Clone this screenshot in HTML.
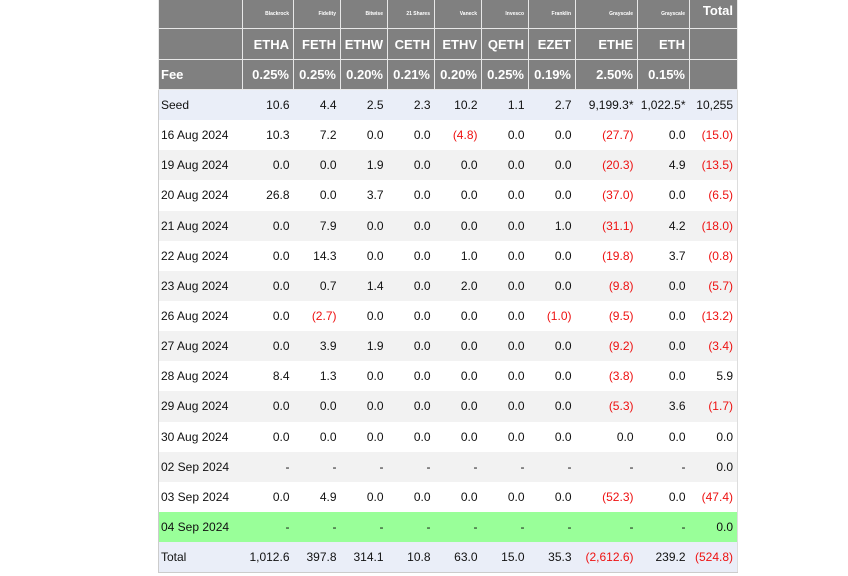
<!DOCTYPE html>
<html><head><style>
body{margin:0;background:#fff;font-family:"Liberation Sans",Arial,sans-serif;}
table{position:absolute;left:158px;top:-1px;border-collapse:collapse;table-layout:fixed;font-size:12px;color:#111;}
td{padding:0 4px 0 2px;text-align:right;white-space:nowrap;border:0;height:30.15px;}
td:first-child{text-align:left;}
thead td{background:#808080;color:#fff;font-weight:bold;border:1px solid #e8e8e8;}
thead tr.p td{height:25px;font-size:5px;vertical-align:middle;}
thead tr.p td.t{font-size:13px;vertical-align:top;padding-top:3px;}
thead tr.s td{height:30px;font-size:13px;}
thead tr.f td{height:29px;font-size:13px;}
tbody tr.w td{background:#fff}
tbody tr.g td{background:#f2f2f2}
tbody tr.b td{background:#eaeef8}
tbody tr.gr td{background:#99ff99}
.r{color:#ee1111}
tbody{border-left:1px solid #ccc;border-right:1px solid #ddd;border-bottom:1px solid #ccc}
</style></head><body>
<table>
<colgroup><col style="width:84px"><col style="width:51px"><col style="width:47px"><col style="width:47px"><col style="width:47px"><col style="width:47px"><col style="width:47px"><col style="width:47px"><col style="width:62px"><col style="width:52px"><col style="width:48px"></colgroup>
<thead>
<tr class="p"><td></td><td>Blackrock</td><td>Fidelity</td><td>Bitwise</td><td>21 Shares</td><td>Vaneck</td><td>Invesco</td><td>Franklin</td><td>Grayscale</td><td>Grayscale</td><td class="t">Total</td></tr>
<tr class="s"><td></td><td>ETHA</td><td>FETH</td><td>ETHW</td><td>CETH</td><td>ETHV</td><td>QETH</td><td>EZET</td><td>ETHE</td><td>ETH</td><td></td></tr>
<tr class="f"><td>Fee</td><td>0.25%</td><td>0.25%</td><td>0.20%</td><td>0.21%</td><td>0.20%</td><td>0.25%</td><td>0.19%</td><td>2.50%</td><td>0.15%</td><td></td></tr>
</thead>
<tbody>
<tr class="b"><td>Seed</td><td>10.6</td><td>4.4</td><td>2.5</td><td>2.3</td><td>10.2</td><td>1.1</td><td>2.7</td><td>9,199.3*</td><td>1,022.5*</td><td>10,255</td></tr>
<tr class="w"><td>16 Aug 2024</td><td>10.3</td><td>7.2</td><td>0.0</td><td>0.0</td><td class="r">(4.8)</td><td>0.0</td><td>0.0</td><td class="r">(27.7)</td><td>0.0</td><td class="r">(15.0)</td></tr>
<tr class="g"><td>19 Aug 2024</td><td>0.0</td><td>0.0</td><td>1.9</td><td>0.0</td><td>0.0</td><td>0.0</td><td>0.0</td><td class="r">(20.3)</td><td>4.9</td><td class="r">(13.5)</td></tr>
<tr class="w"><td>20 Aug 2024</td><td>26.8</td><td>0.0</td><td>3.7</td><td>0.0</td><td>0.0</td><td>0.0</td><td>0.0</td><td class="r">(37.0)</td><td>0.0</td><td class="r">(6.5)</td></tr>
<tr class="g"><td>21 Aug 2024</td><td>0.0</td><td>7.9</td><td>0.0</td><td>0.0</td><td>0.0</td><td>0.0</td><td>1.0</td><td class="r">(31.1)</td><td>4.2</td><td class="r">(18.0)</td></tr>
<tr class="w"><td>22 Aug 2024</td><td>0.0</td><td>14.3</td><td>0.0</td><td>0.0</td><td>1.0</td><td>0.0</td><td>0.0</td><td class="r">(19.8)</td><td>3.7</td><td class="r">(0.8)</td></tr>
<tr class="g"><td>23 Aug 2024</td><td>0.0</td><td>0.7</td><td>1.4</td><td>0.0</td><td>2.0</td><td>0.0</td><td>0.0</td><td class="r">(9.8)</td><td>0.0</td><td class="r">(5.7)</td></tr>
<tr class="w"><td>26 Aug 2024</td><td>0.0</td><td class="r">(2.7)</td><td>0.0</td><td>0.0</td><td>0.0</td><td>0.0</td><td class="r">(1.0)</td><td class="r">(9.5)</td><td>0.0</td><td class="r">(13.2)</td></tr>
<tr class="g"><td>27 Aug 2024</td><td>0.0</td><td>3.9</td><td>1.9</td><td>0.0</td><td>0.0</td><td>0.0</td><td>0.0</td><td class="r">(9.2)</td><td>0.0</td><td class="r">(3.4)</td></tr>
<tr class="w"><td>28 Aug 2024</td><td>8.4</td><td>1.3</td><td>0.0</td><td>0.0</td><td>0.0</td><td>0.0</td><td>0.0</td><td class="r">(3.8)</td><td>0.0</td><td>5.9</td></tr>
<tr class="g"><td>29 Aug 2024</td><td>0.0</td><td>0.0</td><td>0.0</td><td>0.0</td><td>0.0</td><td>0.0</td><td>0.0</td><td class="r">(5.3)</td><td>3.6</td><td class="r">(1.7)</td></tr>
<tr class="w"><td>30 Aug 2024</td><td>0.0</td><td>0.0</td><td>0.0</td><td>0.0</td><td>0.0</td><td>0.0</td><td>0.0</td><td>0.0</td><td>0.0</td><td>0.0</td></tr>
<tr class="g"><td>02 Sep 2024</td><td>-</td><td>-</td><td>-</td><td>-</td><td>-</td><td>-</td><td>-</td><td>-</td><td>-</td><td>0.0</td></tr>
<tr class="w"><td>03 Sep 2024</td><td>0.0</td><td>4.9</td><td>0.0</td><td>0.0</td><td>0.0</td><td>0.0</td><td>0.0</td><td class="r">(52.3)</td><td>0.0</td><td class="r">(47.4)</td></tr>
<tr class="gr"><td>04 Sep 2024</td><td>-</td><td>-</td><td>-</td><td>-</td><td>-</td><td>-</td><td>-</td><td>-</td><td>-</td><td>0.0</td></tr>
<tr class="b"><td>Total</td><td>1,012.6</td><td>397.8</td><td>314.1</td><td>10.8</td><td>63.0</td><td>15.0</td><td>35.3</td><td class="r">(2,612.6)</td><td>239.2</td><td class="r">(524.8)</td></tr>
</tbody>
</table>
</body></html>
